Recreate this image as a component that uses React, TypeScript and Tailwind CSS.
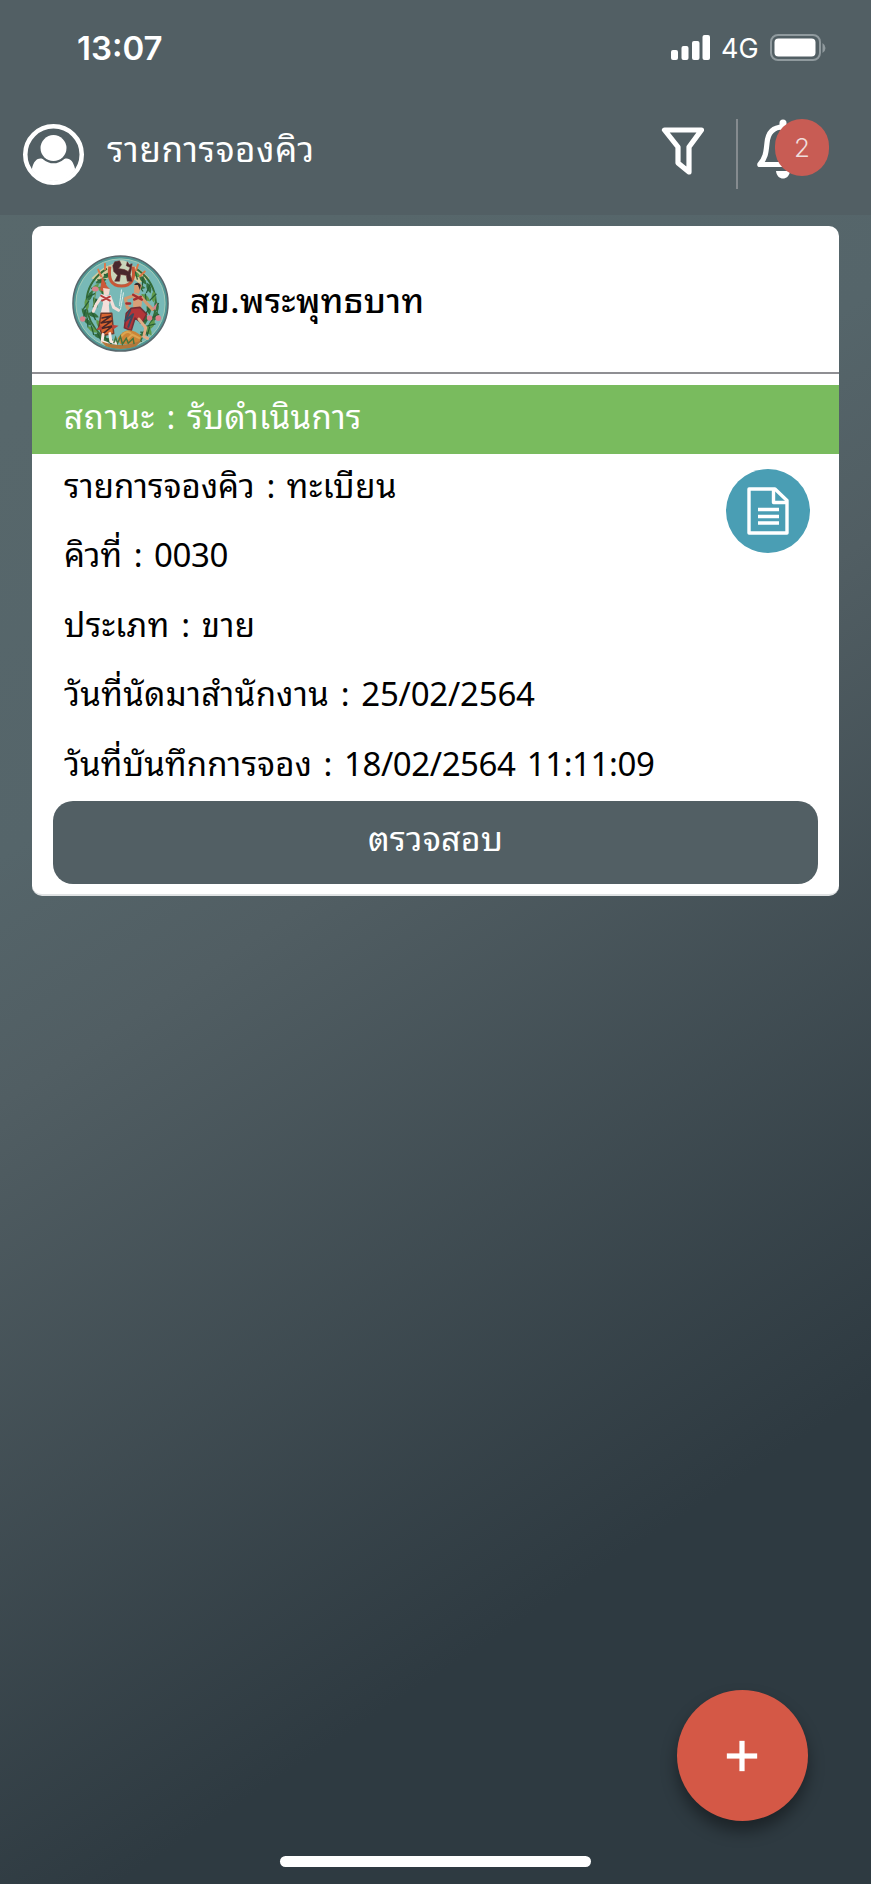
import { Plus } from 'lucide-react';

const details = [
  { label: 'รายการจองคิว', value: 'ทะเบียน', labelSpacing: 'tracking-[0.1px]', valueSpacing: 'tracking-[0.5px]' },
  { label: 'คิวที่', value: '0030', labelSpacing: 'tracking-[0px]', valueSpacing: 'tracking-[-0.4px]' },
  { label: 'ประเภท', value: 'ขาย', labelSpacing: 'tracking-[0.4px]', valueSpacing: 'tracking-[0.4px]' },
  { label: 'วันที่นัดมาสำนักงาน', value: '25/02/2564', labelSpacing: 'tracking-[0.4px]', valueSpacing: 'tracking-[-0.2px]' },
  { label: 'วันที่บันทึกการจอง', value: '18/02/2564 11:11:09', labelSpacing: 'tracking-[0.2px]', valueSpacing: 'tracking-[-0.4px]' },
];

const leaves = [
  [24, 34, -50], [30, 27, -20], [19, 42, -70], [15, 51, 80], [13, 60, 60], [16, 69, 40], [21, 77, 30], [28, 84, 20],
  [37, 21, -30], [31, 37, 40], [24, 49, 70], [22, 62, 20], [28, 72, 60], [33, 80, 70], [37, 88, 0],
  [66, 20, 30], [73, 26, 50], [79, 34, 70], [84, 43, 90], [87, 53, 80], [86, 63, 110], [82, 72, 120], [76, 80, 140],
  [70, 33, 10], [76, 44, 40], [79, 56, 80], [75, 68, 110], [79, 78, 60], [68, 88, 150],
];

const Seal = () => (
  <svg viewBox="0 0 100 100" className="size-[97px] shrink-0">
    <circle cx="50" cy="50" r="49" fill="#4f9794" stroke="#58686d" strokeWidth="1.6" />
    <circle cx="50" cy="50" r="46" fill="#78b9b7" stroke="#a9cbb7" strokeWidth="1" />
    <path d="M20 24Q50 -8 80 24L69 29Q50 12 30 29Z" fill="#d5cda0" />
    <g fill="none" stroke="#356c38" strokeWidth="2">
      <path d="M36 14C12 29 9 55 24 76C30 84 38 89 46 91" />
      <path d="M66 14C88 28 93 56 77 76C72 83 64 89 54 91" />
    </g>
    {leaves.map(([x, y, turn], i) => (
      <g key={i} transform={`translate(${x} ${y}) rotate(${turn})`}>
        <path d="M-6 0Q-1 -5 6 0Q0 4 -6 0" fill={i % 3 === 0 ? '#609a49' : '#34703f'} />
        <path d="M-3 -3L4 4" stroke="#275c38" strokeWidth="1.3" />
      </g>
    ))}
    <g stroke="#dd7848" strokeWidth="2" strokeLinecap="round">
      <path d="M27 15L30 22M34 9L34 15M68 10L66 16M75 17L70 22" />
    </g>
    {/* guardian lion */}
    <circle cx="51" cy="18" r="12.5" fill="#c9d6bb" />
    <path d="M39 12Q36 32 51 32Q66 32 63 12" fill="none" stroke="#c85737" strokeWidth="3.2" />
    <path d="M42 11L44 7L49 6L51 10L48 14L54 15L58 17L60 13L56 11L57 7L59 10L62 9L61 16L60 20L62 27H57L56 21L50 20L49 27H44L47 21L43 17Z" fill="#48282d" stroke="#6c3030" strokeWidth="0.6" />
    {/* left figure */}
    <g strokeLinejoin="round" strokeLinecap="round">
      <path d="M29 36L31 22L36 32L39 35L35 39Z" fill="#cb593a" />
      <path d="M32 34L39 35L38 41L33 42Z" fill="#f2d6cc" />
      <path d="M31 42L25 51L22 58M39 43L43 54L48 57" fill="none" stroke="#f4ded8" strokeWidth="3.2" />
      <path d="M30 41L40 42L38 52L39 62H29L32 50Z" fill="#f4dfdb" />
      <path d="M30 42L39 47M31 47L39 43" stroke="#b63c3a" strokeWidth="2" />
      <path d="M30 60L41 60L43 81L31 83L28 73Z" fill="#d96530" stroke="#753c2c" strokeWidth="1.5" />
      <path d="M31 65L40 63L30 70L41 68L30 76L42 73L32 81" fill="none" stroke="#4a2828" strokeWidth="1.6" />
      <path d="M30 72L25 77L31 77M41 72L48 73L42 77" fill="#bd4439" />
      <path d="M32 82L31 89L36 91M39 81L40 89L46 91" fill="none" stroke="#fce9e2" strokeWidth="3" />
      <path d="M51 36L49 52M53 39L50 56" stroke="#e1f0ee" strokeWidth="1" strokeDasharray="3 1" />
      <path d="M25 35L22 53" stroke="#6a914a" strokeWidth="1" />
    </g>
    {/* right figure */}
    <g strokeLinejoin="round" strokeLinecap="round">
      <path d="M64 31Q70 25 72 32L69 40L64 39Z" fill="#d69b72" />
      <path d="M64 31Q67 26 71 31L70 36L68 31Z" fill="#352a2c" />
      <path d="M63 42L55 45L57 54L63 58M72 44L79 52L83 56" fill="none" stroke="#d39a70" strokeWidth="3.2" />
      <path d="M63 39L73 43L71 57L63 56Z" fill="#d9a078" />
      <path d="M63 41L72 46M64 46L71 43M56 50H60" stroke="#a32f31" strokeWidth="2.4" />
      <path d="M61 55L70 54L77 61L72 70L65 65L61 78L54 75L56 60Z" fill="#b33538" stroke="#742f35" strokeWidth="1.6" />
      <path d="M60 57L55 68L63 61L58 74" fill="none" stroke="#384b60" strokeWidth="2" />
      <path d="M69 66L76 75L74 84L78 86" fill="none" stroke="#e1ac86" strokeWidth="3" />
    </g>
    <path d="M47 86Q57 70 72 84L69 91L50 92Z" fill="#cb8537" />
    <path d="M49 87Q55 76 61 81M56 88L62 82L70 86" fill="none" stroke="#dca650" strokeWidth="2" />
    <path d="M30 89Q50 97 72 88L66 94Q50 100 35 94Z" fill="#b2773a" />
    <path d="M43 91L45 85L47 91L50 84L52 92L56 86L58 91L63 86L64 92" fill="none" stroke="#47733d" strokeWidth="1.5" />
    <g fill="#d9828b">
      <ellipse cx="24" cy="35" rx="3.5" ry="2.6" />
      <circle cx="11" cy="66" r="2.8" />
      <circle cx="80" cy="65" r="2.8" />
      <circle cx="89" cy="65" r="3" />
      <path d="M83 55L88 49L86 57Z" />
    </g>
  </svg>
);

const StatusBar = () => (
  <div className="flex h-[96px] items-center text-white">
    <span className="ml-[77px] font-[Inter] text-[33px] leading-none font-semibold">13:07</span>
    <div className="mr-[45px] ml-auto flex items-center">
      <svg viewBox="0 0 40 26" className="h-[26px] w-[40px]" fill="white">
        <rect x="0" y="15" width="7" height="10" rx="2" />
        <rect x="10.5" y="11" width="7" height="14" rx="2" />
        <rect x="21" y="6" width="7.5" height="19" rx="2" />
        <rect x="31.5" y="0" width="7.5" height="25" rx="2" />
      </svg>
      <span className="ml-[10px] w-[38px] font-[Inter] text-[27px] leading-none">4G</span>
      <svg viewBox="0 0 56 28" className="ml-[11px] h-[28px] w-[56px]">
        <rect x="1" y="1" width="49" height="25" rx="7" fill="none" stroke="#909a9e" strokeWidth="2" />
        <rect x="4.5" y="4.5" width="41" height="18" rx="4" fill="white" />
        <path d="M52.5 9V19Q55.5 17 55.5 14Q55.5 11 52.5 9" fill="#909a9e" />
      </svg>
    </div>
  </div>
);

const Header = () => (
  <header className="h-[215px] bg-[#525f64]">
    <StatusBar />
    <div className="flex h-[119px] items-start text-white">
      <svg viewBox="0 0 62 62" className="mt-[28px] ml-[23px] size-[61px]">
        <circle cx="31" cy="31" r="28.7" fill="none" stroke="white" strokeWidth="4.6" />
        <circle cx="31" cy="24.5" r="13.2" fill="white" />
        <path d="M9 46C11 36 16 34 20 35.5Q31 44.5 42 35.5C47 34 51 37 53 46C48 54 41 58 31 58S14 54 9 46Z" fill="white" />
      </svg>
      <h1 className="mt-[25px] ml-[23px] text-[35px] leading-[50px] font-normal tracking-[0.6px] whitespace-nowrap">รายการจองคิว</h1>
      <svg viewBox="0 0 44 50" className="mt-[30px] mr-[31px] ml-auto h-[50px] w-[44px]">
        <path d="M3.5 4H40.5L28 21V46L17 37V21Z" fill="none" stroke="white" strokeWidth="5.2" strokeLinejoin="round" />
      </svg>
      <div className="mt-[23px] h-[70px] w-[2px] bg-[#858b8f]" />
      <div className="relative mt-[23px] mr-[42px] ml-[19px] h-[60px] w-[72px]">
        <svg viewBox="0 0 52 60" className="h-[60px] w-[52px]">
          <path d="M2.8 45.5C9 38 9 33 10 24C11 13 17 8 26 8S41 13 42 24C43 33 43 38 49 45.5Z" fill="none" stroke="white" strokeWidth="5.2" strokeLinejoin="round" />
          <path d="M26 4V8" stroke="white" strokeWidth="7" strokeLinecap="round" />
          <path d="M19 52H33C32 62 20 62 19 52Z" fill="white" />
        </svg>
        <span className="absolute top-0 right-0 flex h-[57px] w-[54px] items-center justify-center rounded-full bg-[#c85c54] font-[Inter] text-[26px] font-light text-[#f0dedc]">2</span>
      </div>
    </div>
  </header>
);

const DocumentButton = () => (
  <button className="absolute top-[15px] right-[29px] flex size-[84px] items-center justify-center rounded-full bg-[#4a9eb4]" aria-label="เอกสาร">
    <svg viewBox="0 0 42 48" className="h-[48px] w-[42px]" fill="none" stroke="white" strokeWidth="3.4" strokeLinejoin="round">
      <path d="M2 2H28L40 13.5V46H2Z" />
      <path d="M26.5 2V15.5H40" />
      <path d="M11 22.5H32M11 29.5H32M11 36H32" />
    </svg>
  </button>
);

const QueueCard = () => (
  <section className="mx-[32px] mt-[11px] h-[670px] overflow-hidden rounded-[10px] border-b-2 border-[#dfe2e3] bg-white text-black">
    <div className="flex h-[148px] items-center border-b-2 border-[#8f8f93] pt-[9px] pl-[40px]">
      <Seal />
      <h2 className="mb-[12px] ml-[21px] text-[34px] leading-[50px] font-medium tracking-[0.5px] whitespace-nowrap">สข.พระพุทธบาท</h2>
    </div>
    <div className="mt-[11px] h-[69px] bg-[#79bb5e] pl-[32px] text-[33px] leading-[59px] whitespace-nowrap text-white [word-spacing:3px]">
      <span className="tracking-[0.9px]">สถานะ</span> : <span className="tracking-[0.3px]">รับดำเนินการ</span>
    </div>
    <div className="relative">
      {details.map((item) => (
        <p key={item.label} className="h-[69.4px] pl-[32px] text-[33px] leading-[59px] whitespace-nowrap [word-spacing:3px]">
          <span className={item.labelSpacing}>{item.label}</span> : <span className={item.valueSpacing}>{item.value}</span>
        </p>
      ))}
      <DocumentButton />
    </div>
    <button className="mx-[21px] flex h-[83px] w-[765px] items-center justify-center rounded-[20px] bg-[#525f64] pb-[13px] text-[34px] tracking-[0.2px] text-white">
      ตรวจสอบ
    </button>
  </section>
);

const App = () => {
  return (
    <main className="relative h-[1884px] w-[871px] overflow-hidden bg-linear-[147deg,#59696c_0%,#55656a_35%,#515e63_45%,#2e3a41_80%,#2e3a41_100%] font-['Noto_Sans_Thai_Looped','Noto_Looped_Thai','Sarabun','Loma','Garuda','Waree','Noto_Sans',sans-serif]">
      <Header />
      <QueueCard />
      <button className="absolute right-[63px] bottom-[63px] flex size-[131px] items-center justify-center rounded-full bg-[#d45846] pr-px text-white shadow-[0_10px_16px_rgba(0,0,0,0.4)]" aria-label="เพิ่ม">
        <Plus size={52} strokeWidth={2.4} strokeLinecap="butt" />
      </button>
      <div className="absolute bottom-[17px] left-[280px] h-[11px] w-[311px] rounded-full bg-white" />
    </main>
  );
};

export default App;
